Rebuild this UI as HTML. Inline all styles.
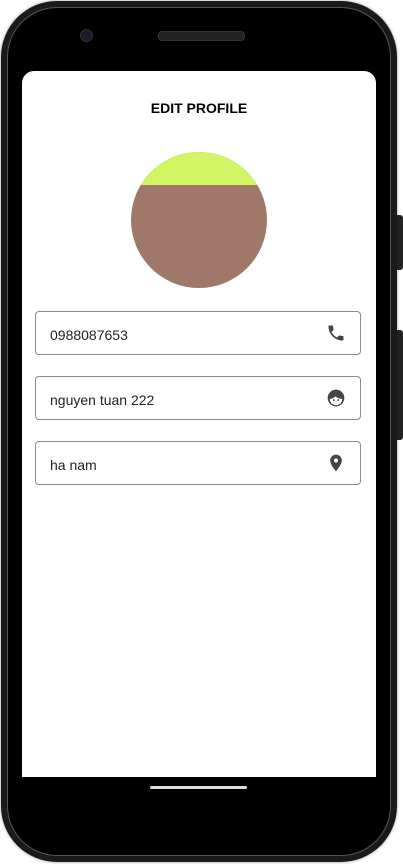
<!DOCTYPE html>
<html><head><style>
html,body{margin:0;padding:0;background:#fff;width:403px;height:864px;overflow:hidden;font-family:"Liberation Sans",Roboto,sans-serif}
.phone{position:absolute;left:1px;top:1px;width:396px;height:861px;border-radius:56px;background:#1a1a1a;box-shadow:0 0 3px rgba(0,0,0,.4)}
.inner{position:absolute;left:6px;top:6px;right:6px;bottom:6px;border-radius:50px;background:#000;border:1px solid #555}
.btn{position:absolute;left:397px;width:6px;background:#222;border-radius:0 3px 3px 0}
.screen{position:absolute;left:22px;top:71px;width:354px;height:706px;background:#fff;border-radius:12px 12px 0 0}
.cam{position:absolute;left:80px;top:29px;width:11px;height:11px;border-radius:50%;background:#1b1d2e;border:1px solid #333}
.spk{position:absolute;left:158px;top:31px;width:85px;height:8px;border-radius:4px;background:#222;border:1px solid #333}
.home{position:absolute;left:150px;top:786px;width:97px;height:3px;border-radius:2px;background:#ddd}
h1{position:absolute;left:0;width:354px;top:29px;margin:0;text-align:center;font-size:14px;font-weight:bold;color:#000}
.av{position:absolute;left:109px;top:81px;width:136px;height:136px;border-radius:50%;overflow:hidden;background:#9f786a}
.av div{position:absolute;left:0;top:0;width:136px;height:33px;background:#d2f563}
.f{position:absolute;left:13px;width:324px;height:42px;border:1px solid #8a8a8a;border-radius:4px;font-size:14px;color:#222}
.f span{position:absolute;left:14px;top:15px}
.f svg{position:absolute;right:14px;top:11px}
</style></head><body>
<div class="phone"><div class="inner"></div></div>
<div class="btn" style="top:215px;height:55px"></div>
<div class="btn" style="top:330px;height:110px"></div>
<div class="cam"></div><div class="spk"></div>
<div class="screen">
<h1>EDIT PROFILE</h1>
<div class="av"><div></div></div>
<div class="f" style="top:240px"><span>0988087653</span>
<svg width="20" height="20" viewBox="0 0 24 24"><path fill="#444" d="M6.6 10.8c1.4 2.8 3.8 5.1 6.6 6.6l2.2-2.2c.3-.3.7-.4 1-.2 1.1.4 2.3.6 3.6.6.6 0 1 .4 1 1V20c0 .6-.4 1-1 1C10.6 21 3 13.4 3 4c0-.6.4-1 1-1h3.5c.6 0 1 .4 1 1 0 1.3.2 2.5.6 3.6.1.3 0 .7-.2 1z"/></svg></div>
<div class="f" style="top:305px"><span>nguyen tuan 222</span>
<svg width="20" height="20" viewBox="0 0 24 24"><circle cx="12" cy="12" r="10" fill="#444"/><path fill="#fff" d="M4.5 13c2.5 0 5.5-1 7-3.2 1.5 2 4 3.2 8 3.2 0 4.2-3.3 7.5-7.5 7.5S4.5 17.2 4.5 13z"/><circle cx="9.5" cy="14.5" r="1.1" fill="#444"/><circle cx="14.5" cy="14.5" r="1.1" fill="#444"/></svg></div>
<div class="f" style="top:370px"><span>ha nam</span>
<svg width="20" height="20" viewBox="0 0 24 24"><path fill="#444" d="M12 2C8.1 2 5 5.1 5 9c0 5.2 7 13 7 13s7-7.8 7-13c0-3.9-3.1-7-7-7zm0 9.5a2.5 2.5 0 110-5 2.5 2.5 0 010 5z"/></svg></div>
</div>
<div class="home"></div>
</body></html>
